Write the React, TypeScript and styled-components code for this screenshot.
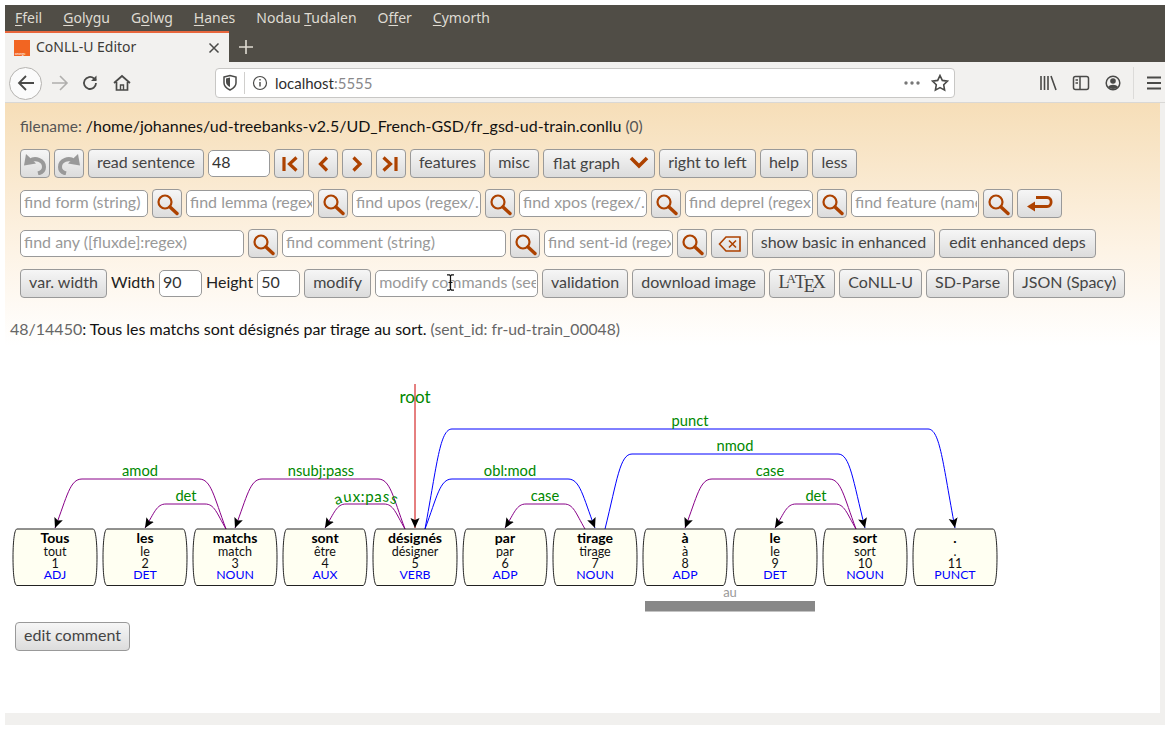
import React from 'react';
import styled, { createGlobalStyle } from 'styled-components';

const GlobalStyle = createGlobalStyle`
  html, body {
    margin: 0;
    padding: 0;
    background: #fff;
    font-family: 'Lato', 'Liberation Sans', sans-serif;
  }
`;

const BrowserWindow = styled.div`
  margin: 5px 0 0 5px;
  width: 1160px;
  height: 720px;
  display: flex;
  flex-direction: column;
  overflow: hidden;
`;

const MenuBar = styled.div`
  height: 26px;
  flex: none;
  box-sizing: border-box;
  background: #504d46;
  display: flex;
  align-items: center;
  padding: 0 0 2px 10px;
  gap: 21px;
  font: 14px 'Noto Sans', sans-serif;
  color: #dfdbd2;
  u {
    text-underline-offset: 2px;
  }
`;

const TabStrip = styled.div`
  height: 31px;
  flex: none;
  background: #504d46;
  display: flex;
  align-items: center;
`;

const Tab = styled.div`
  width: 224px;
  height: 31px;
  box-sizing: border-box;
  background: #f2f1ef;
  border-top: 2px solid #e8663c;
  display: flex;
  align-items: center;
  padding: 0 9px;
  font: 14px 'Noto Sans', sans-serif;
  color: #3c3b37;
`;

const TabTitle = styled.span`
  flex: 1;
  margin-left: 6px;
  padding-bottom: 2px;
`;

const NewTab = styled.div`
  margin-left: 9px;
  display: flex;
  align-items: center;
`;

const NavBar = styled.div`
  height: 41px;
  flex: none;
  box-sizing: border-box;
  background: #f2f1ef;
  border-bottom: 1px solid #d9d8d6;
  display: flex;
  align-items: center;
  padding: 2px 0 0 4px;
`;

const BackCircle = styled.div`
  width: 33px;
  height: 33px;
  box-sizing: border-box;
  border: 1px solid #b5b3b0;
  border-radius: 50%;
  background: #fbfbfb;
  display: flex;
  align-items: center;
  justify-content: center;
`;

const NavIcon = styled.div<{ $gap: number }>`
  margin-left: ${(p) => p.$gap}px;
  display: flex;
  align-items: center;
`;

const UrlBar = styled.div`
  margin-left: 84px;
  width: 740px;
  height: 30px;
  box-sizing: border-box;
  background: #fff;
  border: 1px solid #c8c7c5;
  border-radius: 4px;
  display: flex;
  align-items: center;
  padding: 0 5px 0 6px;
  font: 14px 'Lato', sans-serif;
  color: #2e2e2e;
`;

const UrlDivider = styled.div`
  width: 1px;
  height: 22px;
  background: #d0cfcd;
  margin: 0 7px 0 6px;
`;

const UrlText = styled.span`
  flex: 1;
  margin-left: 7px;
  font-size: 15px;
  span {
    color: #88888a;
  }
`;

const ToolDivider = styled.div`
  width: 1px;
  height: 32px;
  background: #dcdbd9;
  margin-left: 11px;
`;

const Viewport = styled.div`
  flex: 1;
  min-height: 0;
  background: #fff;
  display: flex;
  flex-direction: column;
  border-right: 5px solid #f1f0ee;
  border-bottom: 12px solid #f1f0ee;
`;

const Panel = styled.div`
  height: 243px;
  flex: none;
  box-sizing: border-box;
  background: linear-gradient(to bottom, #f6deb8 0%, #fdf3e5 60%, #ffffff 100%);
  padding: 14px 0 0 15px;
  display: flex;
  flex-direction: column;
`;

const FileLine = styled.div`
  font-size: 15.5px;
  line-height: 18px;
  color: #555;
  margin-bottom: 14px;
  strong {
    font-size: 16px;
    font-weight: 400;
    color: #111;
  }
`;

const ToolRow = styled.div`
  display: flex;
  align-items: center;
  gap: 4px;
  height: 29px;
  margin-bottom: 11px;
`;

const ToolButton = styled.button<{ $w?: number }>`
  flex: none;
  height: 29px;
  width: ${(p) => (p.$w ? `${p.$w}px` : 'auto')};
  box-sizing: border-box;
  padding: 0 0 5px;
  border: 1px solid #999;
  border-radius: 4px;
  background: linear-gradient(to bottom, #f6f6f6, #dcdcdc);
  color: #444;
  font: 16px 'Lato', sans-serif;
  display: flex;
  align-items: center;
  justify-content: center;
`;

const IconButton = styled(ToolButton)`
  padding: 0;
`;

const SelectLike = styled(ToolButton)`
  justify-content: space-between;
  padding: 0 5px 3px 9px;
`;

const Field = styled.input<{ $w: number }>`
  flex: none;
  width: ${(p) => p.$w}px;
  height: 27px;
  box-sizing: border-box;
  padding: 0 1px 5px 3px;
  border: 1px solid #999;
  border-radius: 5px;
  background: #fff;
  color: #333;
  font: 16px 'Lato', sans-serif;
  &::placeholder {
    color: #999;
    opacity: 1;
  }
`;

const RowLabel = styled.span`
  font-size: 16px;
  color: #222;
  padding-bottom: 5px;
`;

const LatexMark = styled.span`
  font-family: 'Liberation Serif', serif;
  font-size: 18px;
  color: #444;
  margin-top: 6px;
`;

const LatexA = styled.span`
  font-size: 13px;
  vertical-align: 5px;
  margin: 0 -1px 0 -3px;
`;

const LatexE = styled.span`
  vertical-align: -4px;
  margin: 0 -2px;
`;

const FieldWrap = styled.div`
  position: relative;
  flex: none;
  display: flex;
`;

const TextCursor = styled.svg`
  position: absolute;
  left: 71px;
  top: 4px;
`;

const SentenceLine = styled.div`
  font-size: 16px;
  color: #666;
  margin: 10px 0 0 -10px;
  strong {
    font-weight: 400;
    color: #111;
  }
  span {
    font-size: 15.7px;
  }
`;

const GraphSvg = styled.svg`
  display: block;
  flex: none;
  margin-top: 34px;
  text {
    font-family: 'Lato', sans-serif;
  }
`;

const CommentRow = styled.div`
  padding: 4px 0 0 10px;
`;

const Accel: React.FC<{ before?: string; ch: string; after?: string }> = ({ before, ch, after }) => (
  <span>
    {before}
    <u>{ch}</u>
    {after}
  </span>
);

const ORANGE = '#ad4200';

const Search: React.FC = () => (
  <svg width="24" height="24" viewBox="0 0 24 24" fill="none">
    <circle cx="10" cy="10" r="6.5" stroke={ORANGE} strokeWidth="2.2" />
    <path d="M15 15l7 6.5" stroke={ORANGE} strokeWidth="3.4" strokeLinecap="round" />
  </svg>
);

const Undo: React.FC<{ flip?: boolean }> = ({ flip }) => (
  <svg width="24" height="23" viewBox="0 0 24 23" fill="none" style={flip ? { transform: 'scaleX(-1)' } : undefined}>
    <path d="M7 9C12 5 21 8 21 15c0 3-2 5.5-6 6.5" stroke="#999" strokeWidth="4" />
    <path d="M1 13.5L3 2l10 9.5z" fill="#999" />
  </svg>
);

const Chevron: React.FC<{ dir: 'left' | 'right'; bar?: boolean }> = ({ dir, bar }) => {
  if (bar) {
    return (
      <svg width="24" height="22" viewBox="0 0 24 22" fill="none" stroke={ORANGE} strokeWidth="3.2">
        {dir === 'left' ? <path d="M19.5 4.5L12.5 11l7 6.5M7 4v14" /> : <path d="M4.5 4.5L11.5 11l-7 6.5M17 4v14" />}
      </svg>
    );
  }
  return (
    <svg width="24" height="22" viewBox="0 0 24 22" fill="none" stroke={ORANGE} strokeWidth="3.2">
      {dir === 'left' ? <path d="M16 4.5L9.5 11l6.5 6.5" /> : <path d="M8.5 4.5L15 11l-6.5 6.5" />}
    </svg>
  );
};

const ChevronDown: React.FC = () => (
  <svg width="20" height="14" viewBox="0 0 20 14" fill="none" stroke={ORANGE} strokeWidth="3.6">
    <path d="M2 3l8 8 8-8" />
  </svg>
);

const ReturnArrow: React.FC = () => (
  <svg width="28" height="20" viewBox="0 0 28 20" fill="none">
    <path d="M8 12.5h13c5.5 0 5.5-9 0-9H10" stroke={ORANGE} strokeWidth="2.8" />
    <path d="M1 12.5l8-5v10z" fill={ORANGE} />
  </svg>
);

const BackspaceIcon: React.FC = () => (
  <svg width="24" height="18" viewBox="0 0 24 18" fill="none" stroke={ORANGE} strokeWidth="1.6">
    <path d="M1.5 9L8 2h14v14H8z" />
    <path d="M11 5.5l7 7M18 5.5l-7 7" />
  </svg>
);

const Favicon: React.FC = () => (
  <svg width="16" height="16" viewBox="0 0 16 16">
    <rect width="16" height="16" fill="#f26522" />
    <text x="1" y="15" fontSize="3.5" fill="#fff" fontFamily="Lato">orange</text>
  </svg>
);

const Glyph: React.FC<{ w?: number; children: React.ReactNode }> = ({ w = 18, children }) => (
  <svg width={w} height="18" viewBox={`0 0 ${w} 18`} fill="none" stroke="#4a4a48" strokeWidth="1.5">
    {children}
  </svg>
);

type Arc = { from: number; to: number; top: number; kind: 'left' | 'right'; label: string; lx: number };

const ARCS: Arc[] = [
  { from: 226, to: 55, top: 479, kind: 'left', label: 'amod', lx: 140 },
  { from: 226, to: 145, top: 504, kind: 'left', label: 'det', lx: 186 },
  { from: 405, to: 235, top: 479, kind: 'left', label: 'nsubj:pass', lx: 321 },
  { from: 405, to: 325, top: 504, kind: 'left', label: 'aux:pass', lx: 0 },
  { from: 425, to: 955, top: 429, kind: 'right', label: 'punct', lx: 690 },
  { from: 425, to: 595, top: 479, kind: 'right', label: 'obl:mod', lx: 510 },
  { from: 585, to: 505, top: 504, kind: 'left', label: 'case', lx: 545 },
  { from: 605, to: 865, top: 454, kind: 'right', label: 'nmod', lx: 735 },
  { from: 856, to: 685, top: 479, kind: 'left', label: 'case', lx: 770 },
  { from: 856, to: 775, top: 504, kind: 'left', label: 'det', lx: 816 },
];

const TOKENS = [
  ['Tous', 'tout', 'ADJ'],
  ['les', 'le', 'DET'],
  ['matchs', 'match', 'NOUN'],
  ['sont', 'être', 'AUX'],
  ['désignés', 'désigner', 'VERB'],
  ['par', 'par', 'ADP'],
  ['tirage', 'tirage', 'NOUN'],
  ['à', 'à', 'ADP'],
  ['le', 'le', 'DET'],
  ['sort', 'sort', 'NOUN'],
  ['.', '.', 'PUNCT'],
];

const arcPath = ({ from, to, top }: Arc) => {
  const dir = to > from ? 1 : -1;
  const h = 529 - top;
  const d = h > 30 ? 27 : 21;
  const x1 = from + dir * d;
  const x2 = to - dir * d;
  return (
    `M${from},529 C${from + dir * d * 0.45},${top + h * 0.35} ${from + dir * d * 0.55},${top} ${x1},${top} ` +
    `L${x2},${top} C${to - dir * d * 0.55},${top} ${to - dir * d * 0.45},${top + h * 0.35} ${to},528`
  );
};

const tokenShape = (c: number) =>
  `M${c - 38},529 H${c + 38} C${c + 41},529 ${c + 42},545 ${c + 42},557 C${c + 42},572 ${c + 41},585.5 ${c + 38},585.5 ` +
  `H${c - 38} C${c - 41},585.5 ${c - 42},572 ${c - 42},557 C${c - 42},545 ${c - 41},529 ${c - 38},529 Z`;

const DepGraph: React.FC = () => (
  <GraphSvg width="1155" height="238" viewBox="5 380 1155 238">
    <defs>
      <marker id="head" markerUnits="userSpaceOnUse" markerWidth="12" markerHeight="12" refX="10" refY="6" orient="auto">
        <path d="M0,1.5 L10,6 L0,10.5 L2,6 Z" fill="#000" />
      </marker>
      <path id="auxArc" d="M330,510 C337,504 344,501.5 352,501.5 L382,501.5 C389,501.5 395,504 402,510" fill="none" />
    </defs>
    <line x1="415" y1="384" x2="415" y2="528" stroke="#cc0000" markerEnd="url(#head)" />
    <text x="415" y="403" textAnchor="middle" fontSize="17" fill="#008800">root</text>
    {ARCS.map((a, i) => (
      <g key={i}>
        <path d={arcPath(a)} fill="none" stroke={a.kind === 'left' ? '#880088' : '#0000ff'} markerEnd="url(#head)" />
        {a.lx > 0 && (
          <text x={a.lx} y={a.top - 3} textAnchor="middle" fontSize="14.7" fill="#008800">
            {a.label}
          </text>
        )}
      </g>
    ))}
    <text fontSize="15" fill="#008800" textAnchor="middle" letterSpacing="0.6">
      <textPath href="#auxArc" startOffset="50%">aux:pass</textPath>
    </text>
    {TOKENS.map(([form, lemma, upos], i) => {
      const c = 55 + i * 90;
      return (
        <g key={i} textAnchor="middle">
          <path d={tokenShape(c)} fill="#fffff2" stroke="#222" />
          <text x={c} y="543" fontSize="14" fontWeight="700" fill="#000">{form}</text>
          <text x={c} y="556" fontSize="12.5" fill="#111">{lemma}</text>
          <text x={c} y="568" fontSize="12.5" fill="#111">{i + 1}</text>
          <text x={c} y="579" fontSize="12.3" fill="#0000ff">{upos}</text>
        </g>
      );
    })}
    <text x="730" y="597" textAnchor="middle" fontSize="13" fill="#999">au</text>
    <rect x="645" y="601" width="170" height="10.5" fill="#888" />
  </GraphSvg>
);

const SearchField: React.FC<{ w: number; hint: string }> = ({ w, hint }) => (
  <>
    <Field $w={w} placeholder={hint} readOnly />
    <IconButton $w={30}><Search /></IconButton>
  </>
);

const App: React.FC = () => (
  <>
    <GlobalStyle />
    <BrowserWindow>
      <MenuBar>
        <Accel ch="F" after="feil" />
        <Accel ch="G" after="olygu" />
        <Accel before="G" ch="o" after="lwg" />
        <Accel ch="H" after="anes" />
        <Accel before="Nodau " ch="T" after="udalen" />
        <Accel before="O" ch="f" after="fer" />
        <Accel ch="C" after="ymorth" />
      </MenuBar>
      <TabStrip>
        <Tab>
          <Favicon />
          <TabTitle>CoNLL-U Editor</TabTitle>
          <svg width="12" height="12" viewBox="0 0 12 12" stroke="#4a4a48" strokeWidth="1.5">
            <path d="M1.5 1.5l9 9M10.5 1.5l-9 9" />
          </svg>
        </Tab>
        <NewTab>
          <svg width="16" height="16" viewBox="0 0 16 16" stroke="#dfdbd2" strokeWidth="1.6">
            <path d="M8 1v14M1 8h14" />
          </svg>
        </NewTab>
      </TabStrip>
      <NavBar>
        <BackCircle>
          <Glyph>
            <path d="M2 9h15M9 2L2 9l7 7" strokeWidth="1.8" />
          </Glyph>
        </BackCircle>
        <NavIcon $gap={9}>
          <svg width="18" height="18" viewBox="0 0 18 18" fill="none" stroke="#b0afad" strokeWidth="1.6">
            <path d="M1 9h15M9 2l7 7-7 7" />
          </svg>
        </NavIcon>
        <NavIcon $gap={12}>
          <Glyph>
            <path d="M15 9a6 6 0 1 1-2-4.5L15 6" strokeWidth="1.8" />
            <path d="M15.5 1.5v5.5H10" fill="#4a4a48" stroke="none" />
          </Glyph>
        </NavIcon>
        <NavIcon $gap={14}>
          <Glyph>
            <path d="M1 9l8-7 8 7M3.5 8v8h11V8" strokeWidth="1.7" />
            <path d="M7.5 16v-5h3v5" strokeWidth="1.4" />
          </Glyph>
        </NavIcon>
        <UrlBar>
          <Glyph w={16}>
            <path d="M2 3l6-1.5L14 3v6c0 3-3 5.5-6 7-3-1.5-6-4-6-7z" />
            <path d="M8 3.5V13c-2-1-4-2.5-4-5V4.5z" fill="#4a4a48" stroke="none" />
          </Glyph>
          <UrlDivider />
          <Glyph w={16}>
            <circle cx="8" cy="9" r="6.5" strokeWidth="1.2" />
            <path d="M8 8v4.5M8 5v1.5" strokeWidth="1.4" />
          </Glyph>
          <UrlText>localhost<span>:5555</span></UrlText>
          <svg width="18" height="6" viewBox="0 0 18 6" fill="#777">
            <circle cx="3" cy="3" r="1.7" />
            <circle cx="9" cy="3" r="1.7" />
            <circle cx="15" cy="3" r="1.7" />
          </svg>
          <NavIcon $gap={10}>
            <Glyph>
              <path d="M9 1.5l2.3 4.9 5.2.7-3.8 3.7.9 5.3L9 13.6l-4.6 2.5.9-5.3L1.5 7.1l5.2-.7z" strokeWidth="1.6" />
            </Glyph>
          </NavIcon>
        </UrlBar>
        <NavIcon $gap={84}>
          <Glyph>
            <path d="M2 2v14M5.5 2v14M9 2v14M12 2l5 14" strokeWidth="1.6" />
          </Glyph>
        </NavIcon>
        <NavIcon $gap={15}>
          <Glyph>
            <rect x="1.5" y="2.5" width="15" height="13" rx="2" />
            <path d="M8 2.5v13M3.5 6h2.5M3.5 9h2.5" />
          </Glyph>
        </NavIcon>
        <NavIcon $gap={14}>
          <Glyph>
            <circle cx="9" cy="9" r="6.8" />
            <circle cx="9" cy="7" r="2.8" fill="#4a4a48" stroke="none" />
            <path d="M4 13c2-3 8-3 10 0-2 2.5-8 2.5-10 0z" fill="#4a4a48" stroke="none" />
          </Glyph>
        </NavIcon>
        <ToolDivider />
        <NavIcon $gap={11}>
          <Glyph>
            <path d="M2 3.5h14M2 9h14M2 14.5h14" strokeWidth="1.8" />
          </Glyph>
        </NavIcon>
      </NavBar>
      <Viewport>
        <Panel>
          <FileLine>
            filename: <strong>/home/johannes/ud-treebanks-v2.5/UD_French-GSD/fr_gsd-ud-train.conllu</strong> (0)
          </FileLine>
          <ToolRow>
            <IconButton $w={30}><Undo /></IconButton>
            <IconButton $w={30}><Undo flip /></IconButton>
            <ToolButton $w={116}>read sentence</ToolButton>
            <Field $w={62} value="48" readOnly />
            <IconButton $w={30}><Chevron dir="left" bar /></IconButton>
            <IconButton $w={30}><Chevron dir="left" /></IconButton>
            <IconButton $w={30}><Chevron dir="right" /></IconButton>
            <IconButton $w={30}><Chevron dir="right" bar /></IconButton>
            <ToolButton $w={75}>features</ToolButton>
            <ToolButton $w={50}>misc</ToolButton>
            <SelectLike $w={112}>flat graph<ChevronDown /></SelectLike>
            <ToolButton $w={97}>right to left</ToolButton>
            <ToolButton $w={48}>help</ToolButton>
            <ToolButton $w={45}>less</ToolButton>
          </ToolRow>
          <ToolRow>
            <SearchField w={128} hint="find form (string)" />
            <SearchField w={128} hint="find lemma (regex)" />
            <SearchField w={129} hint="find upos (regex/...)" />
            <SearchField w={128} hint="find xpos (regex/...)" />
            <SearchField w={128} hint="find deprel (regex)" />
            <SearchField w={128} hint="find feature (name)" />
            <IconButton $w={45}><ReturnArrow /></IconButton>
          </ToolRow>
          <ToolRow>
            <SearchField w={224} hint="find any ([fluxde]:regex)" />
            <SearchField w={224} hint="find comment (string)" />
            <SearchField w={129} hint="find sent-id (regex)" />
            <IconButton $w={37}><BackspaceIcon /></IconButton>
            <ToolButton $w={183}>show basic in enhanced</ToolButton>
            <ToolButton $w={157}>edit enhanced deps</ToolButton>
          </ToolRow>
          <ToolRow>
            <ToolButton $w={87}>var. width</ToolButton>
            <RowLabel>Width</RowLabel>
            <Field $w={43} value="90" readOnly />
            <RowLabel>Height</RowLabel>
            <Field $w={43} value="50" readOnly />
            <ToolButton $w={67}>modify</ToolButton>
            <FieldWrap>
              <Field $w={163} placeholder="modify commands (see" readOnly />
              <TextCursor width="9" height="17" viewBox="0 0 9 17" fill="none" stroke="#111" strokeWidth="1.2">
                <path d="M1 .8h2.5L4.5 2l1-1.2H8M4.5 2v13M1 16.2h2.5l1-1.2 1 1.2H8M2.5 8.5h4" />
              </TextCursor>
            </FieldWrap>
            <ToolButton $w={86}>validation</ToolButton>
            <ToolButton $w={133}>download image</ToolButton>
            <ToolButton $w={66}>
              <LatexMark>L<LatexA>A</LatexA>T<LatexE>E</LatexE>X</LatexMark>
            </ToolButton>
            <ToolButton $w={83}>CoNLL-U</ToolButton>
            <ToolButton $w={83}>SD-Parse</ToolButton>
            <ToolButton $w={112}>JSON (Spacy)</ToolButton>
          </ToolRow>
          <SentenceLine>
            48/14450<strong>: Tous les matchs sont désignés par tirage au sort.</strong> <span>(sent_id: fr-ud-train_00048)</span>
          </SentenceLine>
        </Panel>
        <DepGraph />
        <CommentRow>
          <ToolButton $w={115}>edit comment</ToolButton>
        </CommentRow>
      </Viewport>
    </BrowserWindow>
  </>
);

export default App;
